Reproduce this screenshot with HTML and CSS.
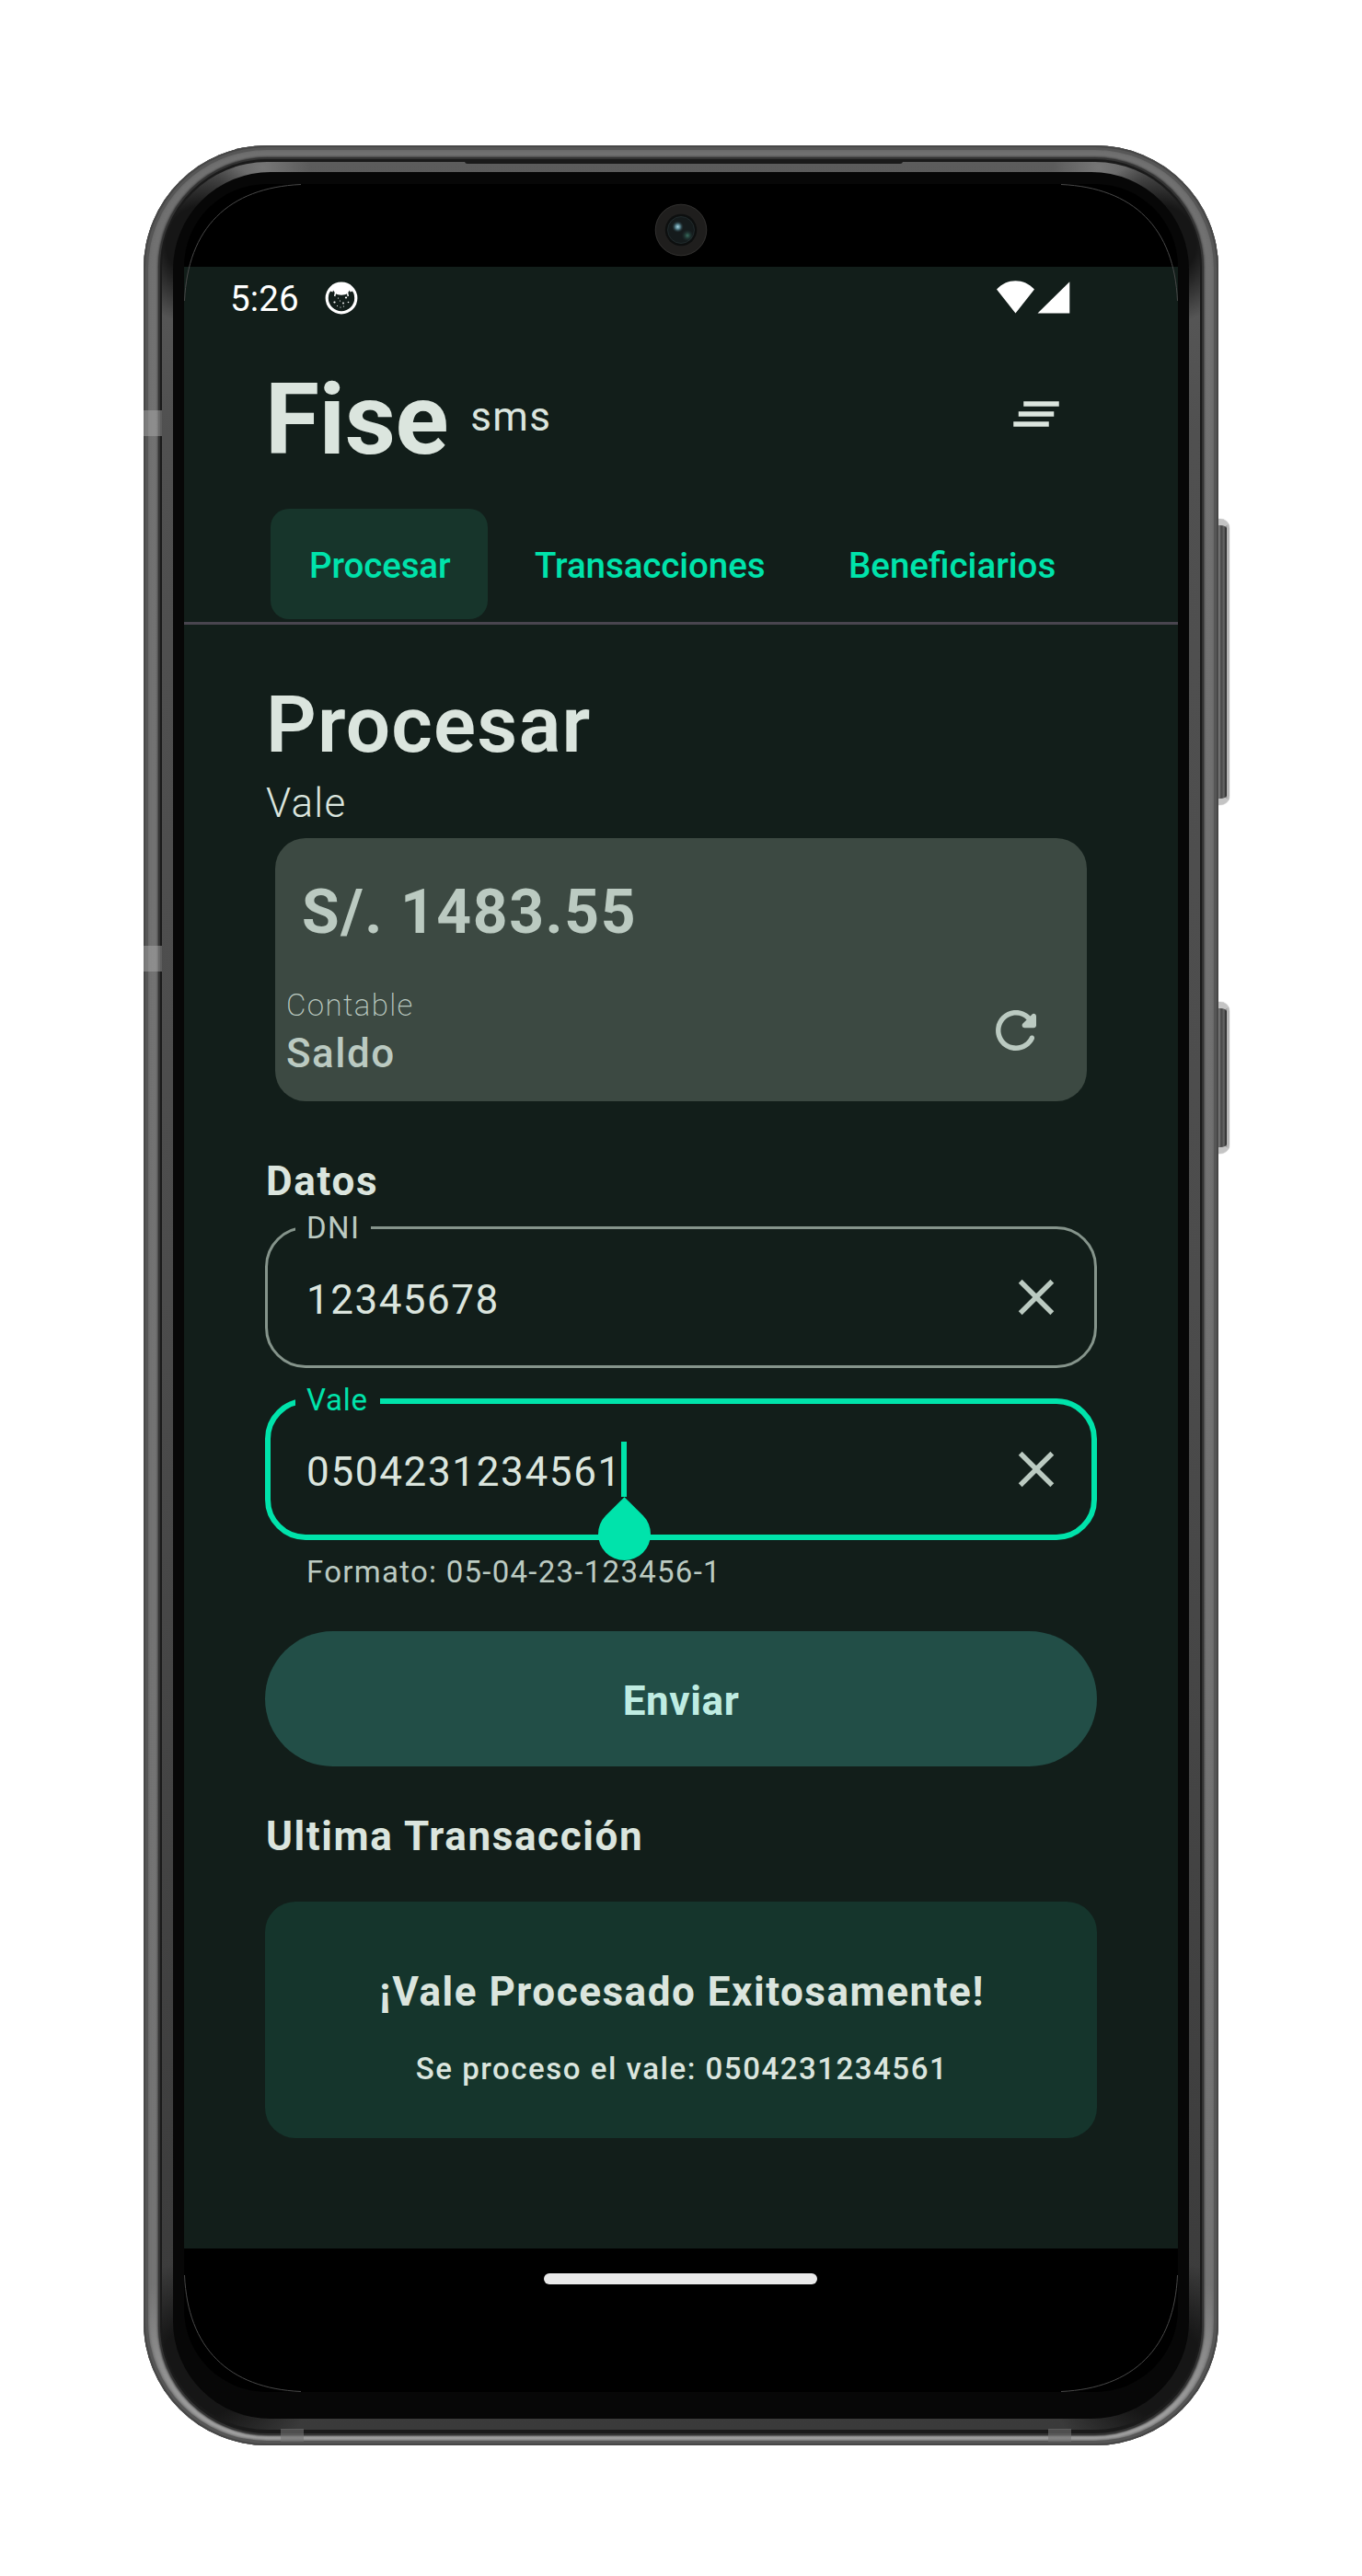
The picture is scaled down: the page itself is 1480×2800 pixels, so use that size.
FILE: index.html
```html
<!DOCTYPE html>
<html lang="es">
<head>
<meta charset="utf-8">
<title>Fise sms</title>
<link rel="stylesheet" href="styles.css">
</head>
<body>
<div class="phone">
  <span class="side-button volume"></span>
  <span class="side-button power"></span>
  <div class="shell"></div>
  <div class="seam"></div>
  <div class="rim"></div>
  <div class="speaker"></div>
  <div class="bezel"></div>
  <span class="antenna left-top"></span>
  <span class="antenna left-mid"></span>
  <span class="antenna bottom-left"></span>
  <span class="antenna bottom-right"></span>

  <div class="screen">
    <div class="cutout">
      <svg class="camera" viewBox="0 0 58 58">
        <defs>
          <radialGradient id="glint"><stop offset="0" stop-color="#a5d3df"/><stop offset=".4" stop-color="#55808c"/><stop offset="1" stop-color="#1b2a2d" stop-opacity="0"/></radialGradient>
          <radialGradient id="green"><stop offset="0" stop-color="#39705f"/><stop offset="1" stop-color="#1b2a2d" stop-opacity="0"/></radialGradient>
        </defs>
        <circle cx="29" cy="29" r="27.8" fill="#1f1e1d" stroke="#3b3a39" stroke-width=".8"/>
        <circle cx="29" cy="29" r="17.2" fill="#0d0f0f"/>
        <circle cx="29" cy="29" r="14.5" fill="#151b1c" stroke="#243032" stroke-width=".8"/>
        <circle cx="36" cy="35" r="6.5" fill="url(#green)"/>
        <circle cx="25.5" cy="25.5" r="6.5" fill="url(#glint)"/>
      </svg>
    </div>

    <div class="app">
      <div class="status">
        <span class="clock">5:26</span>
        <svg class="notif" viewBox="0 0 36 36">
          <circle cx="18" cy="18" r="15.8" fill="none" stroke="#fff" stroke-width="3.2"/>
          <path fill="#fff" d="M5 10C8 4 13 2 18 2s10 2 13 8l-3.500 1.500L27 9.500l-2.500 3.500c-3 2.300-10 2.300-13 0L9 9.500 8.500 11.500z"/>
          <path d="M11.500 12l-.8 4M24.500 12l.8 4" stroke="#fff" stroke-width="1.500"/>
          <g fill="#fff"><circle cx="10.500" cy="22.500" r="1.100"/><circle cx="23" cy="17.500" r="1.100"/><circle cx="20" cy="23.500" r=".9"/><circle cx="25.500" cy="22.500" r=".8"/><circle cx="14.500" cy="18" r=".6"/><circle cx="16.500" cy="21" r=".6"/><circle cx="13.500" cy="26.500" r=".6"/><circle cx="17" cy="28" r=".6"/><circle cx="20.500" cy="27" r=".6"/></g>
        </svg>
        <svg class="signals" viewBox="0 0 80 36">
          <path fill="#fff" d="M0 9.500C11-3 30-3 41 9.500L20.500 35.500zM79.300 1.200V35.500H44.500z"/>
        </svg>
      </div>

      <header class="header">
        <h1 class="brand">Fise</h1>
        <span class="brand-sub">sms</span>
        <svg class="icon menu" viewBox="0 0 24 24"><path d="M5 13h14v-2H5v2zm-2 4h14v-2H3v2zM7 7v2h14V7H7z"/></svg>
      </header>

      <nav class="tabs">
        <a class="tab active">Procesar</a>
        <a class="tab second">Transacciones</a>
        <a class="tab third">Beneficiarios</a>
      </nav>

      <main class="main">
        <h2 class="title">Procesar</h2>
        <p class="subtitle">Vale</p>

        <section class="balance">
          <p class="amount">S/. 1483.55</p>
          <div class="balance-row">
            <div>
              <p class="balance-kind">Contable</p>
              <p class="balance-name">Saldo</p>
            </div>
            <svg class="icon refresh" viewBox="0 0 24 24"><path d="M17.650 6.350c-1.630-1.630-3.940-2.570-6.480-2.310-3.670.37-6.690 3.350-7.100 7.020C3.520 15.910 7.270 20 12 20c3.190 0 5.930-1.870 7.210-4.560.32-.67-.16-1.440-.9-1.440-.37 0-.72.2-.88.53-1.130 2.430-3.840 3.970-6.800 3.310-2.220-.49-4.010-2.300-4.480-4.520C5.310 9.440 8.260 6 12 6c1.660 0 3.140.69 4.220 1.780l-1.510 1.510c-.63.63-.19 1.710.7 1.710H19c.55 0 1-.45 1-1V6.410c0-.89-1.080-1.340-1.710-.71l-.64.65z"/></svg>
          </div>
        </section>

        <h3 class="section">Datos</h3>
        <div class="field">
          <span class="label">DNI</span>
          <span class="value">12345678</span>
          <svg class="icon clear" viewBox="0 0 24 24"><path d="M19 6.410L17.590 5 12 10.590 6.410 5 5 6.410 10.590 12 5 17.590 6.410 19 12 13.410 17.590 19 19 17.590 13.410 12z"/></svg>
        </div>
        <div class="field focused">
          <span class="label">Vale</span>
          <span class="value long">0504231234561<i class="caret"></i></span>
          <svg class="icon clear" viewBox="0 0 24 24"><path d="M19 6.410L17.590 5 12 10.590 6.410 5 5 6.410 10.590 12 5 17.590 6.410 19 12 13.410 17.590 19 19 17.590 13.410 12z"/></svg>
          <i class="handle"></i>
        </div>
        <p class="helper">Formato: 05-04-23-123456-1</p>

        <button class="send">Enviar</button>

        <h3 class="section last">Ultima Transacción</h3>
        <section class="result">
          <p class="result-title">¡Vale Procesado Exitosamente!</p>
          <p class="result-text">Se proceso el vale: 0504231234561</p>
        </section>
      </main>
    </div>

    <div class="home"><span></span></div>
    <svg class="corners" viewBox="0 0 1080 2400">
      <path d="M.5 127C4 48 48 4 127 .5M953 .5C1032 4 1076 48 1079.500 127M1079.500 2273C1076 2352 1032 2396 953 2399.500M127 2399.500C48 2396 4 2352 .5 2273" fill="none" stroke="#484848" stroke-width="1"/>
    </svg>
  </div>
</div>
</body>
</html>
```
FILE: styles.css
```css
* { box-sizing: border-box; margin: 0; padding: 0; }

body {
  width: 1480px;
  height: 2800px;
  background: #fff;
  font-family: Roboto, "Liberation Sans", sans-serif;
  color: #dbe5de;
  overflow: hidden;
}

/* Device */
.phone {
  position: relative;
  width: 1168px;
  height: 2500px;
  margin: 158px 0 0 156px;
  padding: 42px 44px;
}
.shell, .seam, .rim, .bezel { position: absolute; }
.shell {
  inset: 0;
  border-radius: 134px;
  background: linear-gradient(#717171, #747474 93%, #9a9a9a 98%, #a8a8a8);
  box-shadow: inset 0 0 0 2px #474747, inset 0 0 0 5px #565656, inset 0 0 3px 6px #666;
}
.seam {
  inset: 13px 16px 11px;
  border-radius: 119px;
  background: #1a1a1a;
  border: 2px solid #333;
  box-shadow: 0 0 2px 1px #444;
}
.rim {
  inset: 18px 20px 17px;
  border-radius: 114px;
  background:
    radial-gradient(circle at 44px 88px, #161616 40px, transparent 90px),
    radial-gradient(circle at 1084px 88px, #161616 40px, transparent 90px),
    radial-gradient(circle at 45px 2400px, #161616 50px, transparent 120px),
    radial-gradient(circle at 1083px 2400px, #161616 50px, transparent 120px),
    radial-gradient(circle at 110px 6px, #777 0, transparent 50px),
    radial-gradient(circle at 1018px 6px, #777 0, transparent 50px),
    linear-gradient(#5c5c5c, #505050 12%, #4c4c4c 50%, #3a3a3a);
}
.speaker {
  position: absolute;
  top: 16px;
  left: 349px;
  width: 476px;
  height: 4px;
  background: #1a1a1a;
  border-radius: 0 0 3px 3px;
}
.bezel {
  inset: 29px 32px;
  border-radius: 106px;
  background: #070707;
}
.antenna {
  position: absolute;
  background: rgba(175, 175, 175, .45);
}
.left-top { left: 0; top: 288px; width: 20px; height: 28px; }
.left-mid { left: 0; top: 870px; width: 20px; height: 28px; }
.bottom-left, .bottom-right { bottom: 4px; width: 25px; height: 14px; background: rgba(115, 115, 115, .6); }
.bottom-left { left: 149px; }
.bottom-right { left: 983px; }
.side-button {
  position: absolute;
  left: 1160px;
  width: 20px;
  border-radius: 0 10px 10px 0;
  border: solid #b5b5b5;
  border-width: 7px 3px 7px 0;
  border-color: #c4c4c4 #b5b5b5 #c4c4c4;
  background: linear-gradient(90deg, #777 9px, #444 11px, #666 14px, #2e2e2e 16px);
  box-shadow: inset 0 0 1px 0 #444, 0 0 1px #777;
}
.volume { top: 406px; height: 311px; }
.power { top: 931px; height: 165px; }

/* Screen */
.screen {
  position: relative;
  width: 1080px;
  height: 2400px;
  background: #000;
  border-radius: 90px;
}
.cutout { height: 90px; display: flex; justify-content: center; }
.camera { width: 58px; height: 58px; margin-top: 21px; }
.corners { position: absolute; inset: 0; width: 1080px; height: 2400px; }
.app { height: 2154px; background: #121e1a; }
.home { height: 156px; padding: 27px 0 0 391px; }
.home span { display: block; width: 297px; height: 12px; border-radius: 6px; background: #eaeaea; }

.icon { width: 66px; height: 66px; flex: none; }

.status {
  height: 71px;
  padding: 0 117px 0 50px;
  display: flex;
  align-items: center;
  color: #fff;
}
.clock { font-size: 38.500px; line-height: 50px; letter-spacing: .13px; margin-top: -1px; }
.notif { width: 36px; height: 36px; margin: -4px 0 0 28px; }
.signals { width: 80px; height: 36px; margin: -6px 0 0 auto; }

.header {
  height: 180px;
  padding: 0 121px 0 88px;
  display: flex;
  align-items: center;
}
.brand { font-size: 107.500px; font-weight: 700; line-height: 120px; letter-spacing: -.39px; padding-top: 9px; }
.brand-sub { font-size: 44px; line-height: 56px; letter-spacing: 1.350px; margin-left: 24px; padding-top: 4px; }
.menu { margin: -2px 0 0 auto; fill: #dbe5de; }

.tabs {
  height: 138px;
  padding: 12px 0 0 94px;
  display: flex;
  align-items: flex-start;
  border-bottom: 3px solid #49454f;
}
.tab {
  height: 120px;
  font-size: 38.500px;
  font-weight: 500;
  line-height: 123px;
  letter-spacing: -.12px;
  color: #00e3ab;
  white-space: nowrap;
}
.active { width: 236px; padding-left: 42px; border-radius: 20px; background: #17352b; }
.second { margin-left: 51px; width: 252px; letter-spacing: -.08px; }
.third { margin-left: 89px; letter-spacing: 0; }

.main { padding: 59px 88px 0; }
.title { font-size: 85.500px; font-weight: 600; line-height: 100px; letter-spacing: 1.170px; margin-left: 1px; }
.subtitle { font-size: 44px; font-weight: 300; line-height: 56px; letter-spacing: 1.250px; margin: 7px 0 0 1px; }

.balance {
  height: 286px;
  margin: 10px 11px 0;
  padding: 42px 44px 0 12px;
  border-radius: 33px;
  background: #3c4942;
  color: #bbcac1;
}
.amount { font-size: 66px; font-weight: 700; line-height: 78px; letter-spacing: 1.560px; margin-left: 17px; }
.balance-row { display: flex; justify-content: space-between; margin-top: 42px; }
.balance-kind { font-size: 33px; font-weight: 200; line-height: 40px; letter-spacing: 1.370px; }
.balance-name { font-size: 44px; font-weight: 500; line-height: 56px; letter-spacing: 1.450px; margin-top: 4px; }
.refresh { margin-top: 14px; fill: #bbcac1; }

.section { font-size: 44px; font-weight: 700; line-height: 56px; letter-spacing: 1.680px; margin: 59px 0 21px 1px; }
.section.last { letter-spacing: 1.610px; margin: 48px 0 43px 1px; }

.field {
  position: relative;
  height: 154px;
  border: 3px solid #85948b;
  border-radius: 44px;
  padding: 0 30px 0 42px;
  display: flex;
  align-items: center;
  justify-content: space-between;
}
.field + .field { margin-top: 33px; }
.label {
  position: absolute;
  top: -21px;
  left: 30px;
  width: 82px;
  padding-left: 12px;
  background: #121e1a;
  color: #bbcac1;
  font-size: 33px;
  line-height: 40px;
  letter-spacing: 1.400px;
}
.value { font-size: 44px; line-height: 56px; letter-spacing: 1.480px; padding-top: 6px; position: relative; }
.long { letter-spacing: 1.650px; }
.clear { fill: #bbcac1; }
.focused { border: 6px solid #00e3ab; padding: 0 27px 0 39px; }
.focused .label { top: -24px; left: 27px; width: 92px; padding-left: 12px; color: #00e3ab; letter-spacing: .750px; }
.caret { position: absolute; left: 342px; top: 1px; width: 6px; height: 60px; background: #00e3ab; }
.handle {
  position: absolute;
  left: 356px;
  top: 114px;
  width: 57px;
  height: 57px;
  margin-top: -1px;
  border-radius: 0 50% 50% 50%;
  background: #00e3ab;
  transform: rotate(45deg);
}
.helper { font-size: 33px; line-height: 40px; letter-spacing: 1.270px; color: #bbcac1; margin: 15px 0 0 45px; }

.send {
  display: block;
  width: 904px;
  height: 147px;
  margin-top: 44px;
  padding-top: 4px;
  border: 0;
  border-radius: 74px;
  background: #224e47;
  color: #bfece2;
  font: 700 44px/56px Roboto, "Liberation Sans", sans-serif;
  letter-spacing: .620px;
}

.result {
  height: 257px;
  padding-top: 70px;
  border-radius: 33px;
  background: #15352c;
  text-align: center;
}
.result-title { font-size: 44px; font-weight: 700; line-height: 56px; letter-spacing: 1.530px; padding-left: 2px; }
.result-text { font-size: 33px; font-weight: 500; line-height: 40px; letter-spacing: 1.520px; margin-top: 36px; padding-left: 2px; }
```
